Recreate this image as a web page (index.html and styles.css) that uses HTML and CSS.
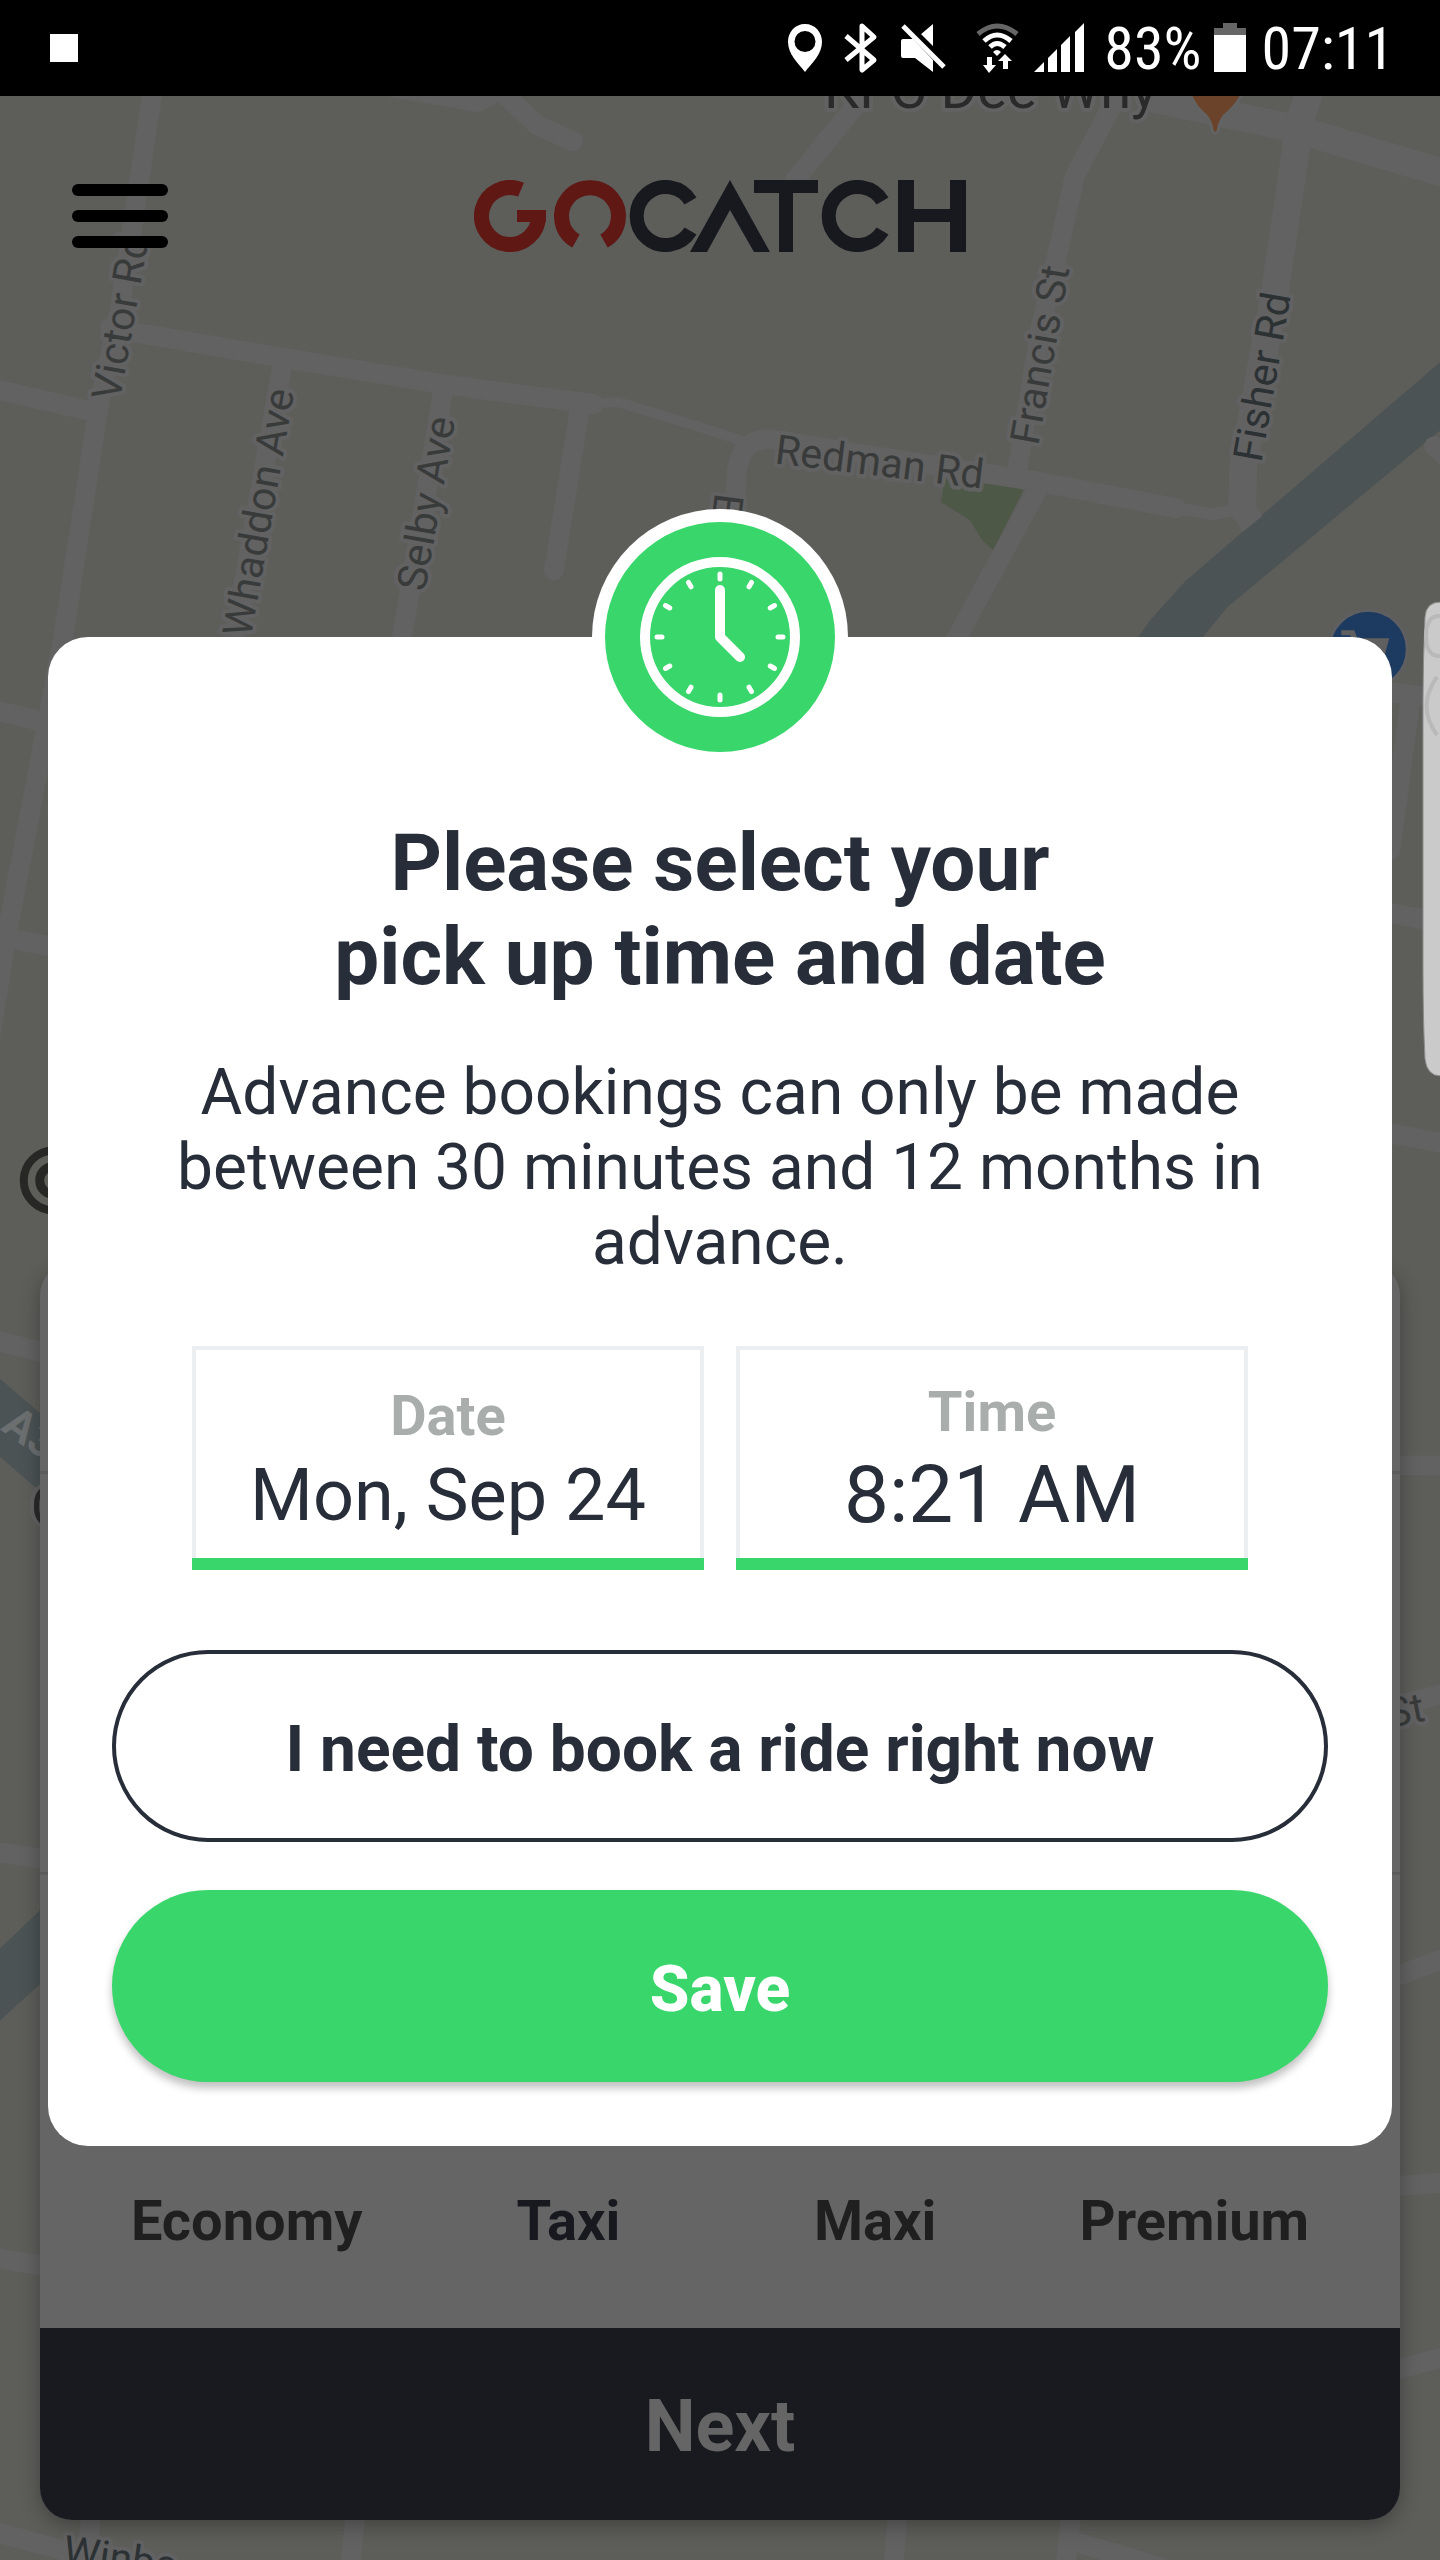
FILE: index.html
```html
<!DOCTYPE html>
<html lang="en">
<head>
<meta charset="utf-8">
<meta name="viewport" content="width=device-width, initial-scale=1">
<title>GoCatch – Advance booking</title>
<link rel="stylesheet" href="styles.css">
</head>
<body>
<header class="status">
  <span class="status-note"></span>
  <div class="status-icons">
    <svg class="status-glyphs" width="298" height="52" viewBox="787 21 298 52" aria-hidden="true">
      <path fill="#fff" fill-rule="evenodd" d="M805 23C795 23 788 31 788 41C788 53 798 62 805 71C812 62 822 53 822 41C822 31 815 23 805 23ZM805 30A10.500 10.500 0 1 1 805 51A10.500 10.500 0 1 1 805 30Z"/>
      <path fill="none" stroke="#fff" stroke-width="5" stroke-linejoin="round" d="M846 35L874 59L862 69V25L874 36L846 59"/>
      <path fill="#fff" d="M903 38H913L933 59V71L915 57H903Q901 57 901 55V40Q901 38 903 38ZM920 34L933 23V47Z"/>
      <path stroke="#000" stroke-width="4" d="M908 23L949 64"/>
      <path stroke="#fff" stroke-width="5" d="M903 25L944 66"/>
      <g fill="none" stroke-width="5">
        <path stroke="#666" d="M978 33Q997 17 1017 33"/>
        <path stroke="#fff" d="M984 40Q997 28 1011 40M990 46Q997 39 1005 46"/>
      </g>
      <path fill="#fff" d="M993 51Q997 47 1001 51L997 55ZM987 56H992V64H996L989 72L983 64H987ZM1003 68V60H998L1005 53L1012 60H1008V68Z"/>
      <path fill="#fff" d="M1034 71L1044 61V71ZM1048 71V57L1057 48V71ZM1061 71V44L1070 35V71ZM1075 71V31L1084 22V71Z"/>
    </svg>
    <span class="battery-level">83%</span>
    <svg class="battery" width="32" height="50" viewBox="0 0 32 50" aria-hidden="true">
      <path fill="#666" d="M9 0H23V5H32V12H0V5H9Z"/><path fill="#fff" d="M0 12H32V49H0Z"/>
    </svg>
    <time class="clock">07:11</time>
  </div>
</header>

<main class="screen">
  <svg class="map" viewBox="0 96 1440 2464" preserveAspectRatio="xMidYMin slice" role="img" aria-label="Map of Dee Why">
    <g class="water">
      <path d="M1440 362L1185 581L1150 620L1136 640H1200L1227 607L1440 430Z"/>
      <path d="M0 1378L44 1416V1494L0 1456Z"/>
      <path d="M0 1948L44 1906V1980L0 2020Z"/>
    </g>
    <path class="park" d="M945 476L1024 488L993 550L982 540L970 520L941 502Z"/>
    <g class="roads">
      <path d="M153 90L120 310L98 412L63 640L8 930L-10 1040"/>
      <path d="M395 88L478 102L500 90L537 125L573 141"/>
      <path d="M0 390L95 412M110 328L285 358L450 385L594 404"/>
      <path class="lane" d="M594 403L618 402L700 427L750 443"/>
      <path d="M283 362L225 690M443 392L400 650M580 408L554 570"/>
      <path d="M735 510L737 470Q742 438 770 439L900 460L1035 481L1176 508"/>
      <path class="alley" d="M1176 508L1213 514L1245 508"/>
      <path d="M860 100L795 180M1115 100L1075 175L1040 330L1018 465M1037 490L950 650"/>
      <path class="wide" d="M1150 98L1292 128L1440 172"/>
      <path class="wide" d="M1310 90L1300 120L1275 290L1243 465L1242 508"/>
      <path fill="#626263" stroke="none" d="M1228 505L1256 505L1262 516L1242 532Z"/>
      <path d="M1434 446L1450 460M1390 692L1440 698M1410 700L1390 850M1390 913L1440 922"/>
      <path d="M0 711L45 722M20 940L60 948M0 1341L44 1352M0 1852L44 1858M0 2258L44 2265M0 2532L140 2570"/>
      <path d="M1390 1133L1440 1142M1400 1465H1440M1400 1704L1440 1694M1400 1974L1440 1959M1400 2185L1440 2182M1400 2368L1440 2357"/>
      <path d="M92 2510L86 2570M356 2510L350 2570M898 2510L893 2570M1071 2510L1065 2570M1072 2540L1160 2566"/>
    </g>
    <g class="labels">
      <text transform="translate(120 402) rotate(-80)">Victor Rd</text>
      <text transform="translate(251 638) rotate(-80)">Whaddon Ave</text>
      <text transform="translate(425 592) rotate(-80)">Selby Ave</text>
      <text transform="translate(774 463) rotate(7)">Redman Rd</text>
      <text transform="translate(1038 446) rotate(-80)">Francis St</text>
      <text class="major" transform="translate(1261 463) rotate(-80)">Fisher Rd</text>
      <text transform="translate(715 492) rotate(97)">E</text>
      <text transform="translate(1389 1727) rotate(-11)">St</text>
      <text class="major" transform="translate(62 2563) rotate(8)">Winbo</text>
      <text class="poi" x="824" y="108">KFC Dee Why</text>
      <text class="poi" x="31" y="1525">C</text>
      <text class="shield" transform="translate(0 1429) rotate(35)">A3</text>
    </g>
    <path fill="#6b422a" stroke="#636363" stroke-width="3" d="M1190 94H1242Q1236 106 1224 116Q1219 122 1218 131Q1215 136 1212 131Q1211 122 1206 116Q1194 106 1190 94Z"/>
    <circle cx="1368" cy="649" r="39" fill="#1d3b60" stroke="#5f5f61" stroke-width="3"/>
    <path fill="#5f5f5f" d="M1341 630H1354L1357 638H1389L1382 664H1360L1350 635H1341Z"/>
    <g fill="none" stroke="#272725">
      <circle cx="54" cy="1180" r="30" stroke-width="8"/>
      <circle cx="54" cy="1180" r="14" stroke-width="9"/>
    </g>
  </svg>

  <div class="app">
    <div class="topbar">
      <button class="menu" type="button" aria-label="Menu"><i></i><i></i><i></i></button>
      <svg class="logo" width="492" height="72" viewBox="474 180 492 72" role="img" aria-label="GoCatch">
        <g fill="none" stroke="#5f1814" stroke-width="15">
          <path d="M521 189.700A28.500 28.500 0 1 0 538.500 216"/>
          <path stroke-width="12" d="M517 216H546"/>
          <path d="M576 241A28.500 28.500 0 1 1 604 241"/>
        </g>
        <g fill="none" stroke="#17191f" stroke-width="14">
          <path d="M690.500 201A29 29 0 1 0 690.500 231"/>
          <path d="M882.500 201A29 29 0 1 0 882.500 231"/>
        </g>
        <path fill="#17191f" d="M730 180L770 252H754L730 210L707 252H690ZM754 180H818V193H793V252H779V193H754ZM898 180H914V209H950V180H966V252H950V222H914V252H898Z"/>
      </svg>
    </div>
    <section class="trip">
      <div class="trip-row pickup"></div>
      <div class="trip-row dropoff"></div>
      <div class="vehicles">
        <button type="button">Economy</button>
        <button type="button" class="chosen">Taxi</button>
        <button type="button">Maxi</button>
        <button type="button">Premium</button>
      </div>
      <button class="next" type="button">Next</button>
    </section>
  </div>

  <div class="overlay">
    <form class="dialog" role="dialog" aria-labelledby="dialog-title">
      <svg class="badge" width="256" height="256" viewBox="-128 -128 256 256" aria-hidden="true">
        <circle r="128" fill="#fff"/>
        <circle r="115" fill="#39d66b"/>
        <circle r="75" fill="none" stroke="#fff" stroke-width="10"/>
        <g stroke="#fff" stroke-width="5" stroke-linecap="round">
          <path d="M0 -63V-58M0 63V58M63 0H58M-63 0H-58"/>
          <path d="M0 -63V-58M0 63V58M63 0H58M-63 0H-58" transform="rotate(30)"/>
          <path d="M0 -63V-58M0 63V58M63 0H58M-63 0H-58" transform="rotate(60)"/>
        </g>
        <path d="M0 -47V0L20 20" fill="none" stroke="#fff" stroke-width="10" stroke-linecap="round" stroke-linejoin="round"/>
      </svg>
      <h1 id="dialog-title">Please select your<br>pick up time and date</h1>
      <p class="hint">Advance bookings can only be made between 30 minutes and 12 months in advance.</p>
      <div class="fields">
        <label class="field date"><span>Date</span><input type="text" value="Mon, Sep 24" readonly></label>
        <label class="field time"><span>Time</span><input type="text" value="8:21 AM" readonly></label>
      </div>
      <button class="btn outline" type="button">I need to book a ride right now</button>
      <button class="btn primary" type="submit">Save</button>
    </form>
  </div>

  <svg class="edge-handle" width="18" height="476" viewBox="0 0 18 476" aria-hidden="true">
    <path fill="#cacaca" stroke="#8c8c8c" d="M19 1Q4 1 3 16Q1 60 1 100V370Q1 420 3 458Q5 475 19 475Z"/>
    <path fill="none" stroke="#b9b9b9" stroke-width="4" d="M19 15Q4 14 4 35Q4 56 19 55M15 76Q-6 105 15 134"/>
  </svg>
</main>
</body>
</html>
```
FILE: styles.css
```css
* { box-sizing: border-box; }

body {
  margin: 0;
  background: #5d5d5a;
  color: #272d39;
  font-family: Roboto, "Liberation Sans", sans-serif;
}

button, input { font: inherit; color: inherit; }
button { border: 0; padding: 0; cursor: pointer; }

/* System status bar */
.status {
  display: flex;
  justify-content: space-between;
  align-items: center;
  height: 96px;
  padding: 0 46px 0 50px;
  background: #000;
  color: #fff;
}
.status-note { width: 28px; height: 28px; background: #fff; }
.status-icons { display: flex; align-items: center; }
.battery-level, .clock {
  font-family: "Roboto Condensed", "Liberation Sans Narrow", Roboto, sans-serif;
  font-size: 60px;
  line-height: 72px;
  padding-top: 2px;
}
.battery-level { margin: 0 12px 0 19px; }
.clock { margin-left: 16px; }

/* Stacked layers: map, booking screen, dialog */
.screen {
  position: relative;
  display: grid;
  grid-template-columns: minmax(0, 1fr);
  overflow: hidden;
}
.app, .overlay { grid-area: 1 / 1; }
.map { position: absolute; inset: 0; width: 100%; height: 100%; }

.water { fill: #4b5355; }
.park { fill: #4d5846; }
.roads { fill: none; stroke: #626263; stroke-width: 20; stroke-linecap: round; stroke-linejoin: round; }
.roads .lane { stroke-width: 10; }
.roads .alley { stroke-width: 12; }
.roads .wide { stroke-width: 28; }
.labels { font-size: 41px; fill: #393b3b; stroke: #626263; stroke-width: 8; stroke-linejoin: round; paint-order: stroke; }
.labels .major { fill: #2c3134; }
.labels .poi { font-size: 56px; fill: #2a2a2a; }
.labels .shield { font-size: 44px; font-weight: 700; fill: #6b6f70; stroke: none; }

.app {
  position: relative;
  display: flex;
  flex-direction: column;
  padding: 84px 40px 41px;
}
.topbar {
  display: grid;
  grid-template-columns: 1fr auto 1fr;
  align-items: center;
  padding-left: 32px;
  padding-right: 32px;
}
.menu { display: flex; flex-direction: column; gap: 14px; width: 96px; background: none; }
.menu i { height: 12px; border-radius: 6px; background: #000; }
.logo { display: block; }

.trip {
  display: flex;
  flex-direction: column;
  margin-top: 1011px;
  border-radius: 32px;
  background: #656565;
  box-shadow: 0 6px 20px rgba(0, 0, 0, 0.3);
  overflow: hidden;
}
.trip-row { border-bottom: 3px solid #5b5b5b; }
.pickup { height: 211px; }
.dropoff { height: 401px; }
.vehicles {
  display: grid;
  grid-template-columns: 321fr 322fr 291fr 347fr;
  padding: 313px 32px 74px 46px;
}
.vehicles button {
  background: none;
  color: #1f1f1f;
  font-size: 56px;
  font-weight: 700;
  line-height: 66px;
}
.vehicles .chosen { color: #17191f; }
.next {
  height: 192px;
  background: #191a1f;
  color: #656565;
  font-size: 72px;
  font-weight: 700;
  line-height: 84px;
  padding-top: 6px;
}

/* Pick-up time dialog */
.overlay { position: relative; padding: 541px 48px 0; }
.dialog {
  display: flex;
  flex-direction: column;
  padding: 0 64px 64px;
  border-radius: 40px;
  background: #fff;
  text-align: center;
}
.badge { align-self: center; margin-top: -128px; }
h1 {
  margin: 51px 0 0;
  font-size: 80px;
  font-weight: 700;
  line-height: 94px;
}
.hint {
  margin: 51px 0 0;
  font-size: 64px;
  line-height: 75px;
}
.fields {
  display: grid;
  grid-template-columns: 1fr 1fr;
  gap: 32px;
  margin: 66px 80px 80px;
}
.field {
  display: flex;
  flex-direction: column;
  justify-content: center;
  gap: 2px;
  height: 224px;
  padding: 18px 4px 12px;
  box-shadow: inset 0 -12px #39d66b, inset 0 0 0 4px #ebeff2;
}
.field span { color: #a9adac; font-size: 56px; font-weight: 700; line-height: 66px; }
.field input {
  width: 100%;
  padding: 0;
  border: 0;
  background: none;
  text-align: center;
}
.date input { font-size: 72px; height: 88px; }
.time input { font-size: 80px; height: 96px; }

.btn {
  height: 192px;
  border-radius: 96px;
  font-size: 64px;
  font-weight: 700;
  padding-top: 6px;
}
.outline { border: 4px solid #272d39; background: #fff; }
.primary {
  margin-top: 48px;
  background: #39d66b;
  color: #fff;
  font-weight: 800;
  box-shadow: 0 6px 8px rgba(0, 0, 0, 0.25);
}

.edge-handle { position: absolute; top: 505px; right: 0; }
```
